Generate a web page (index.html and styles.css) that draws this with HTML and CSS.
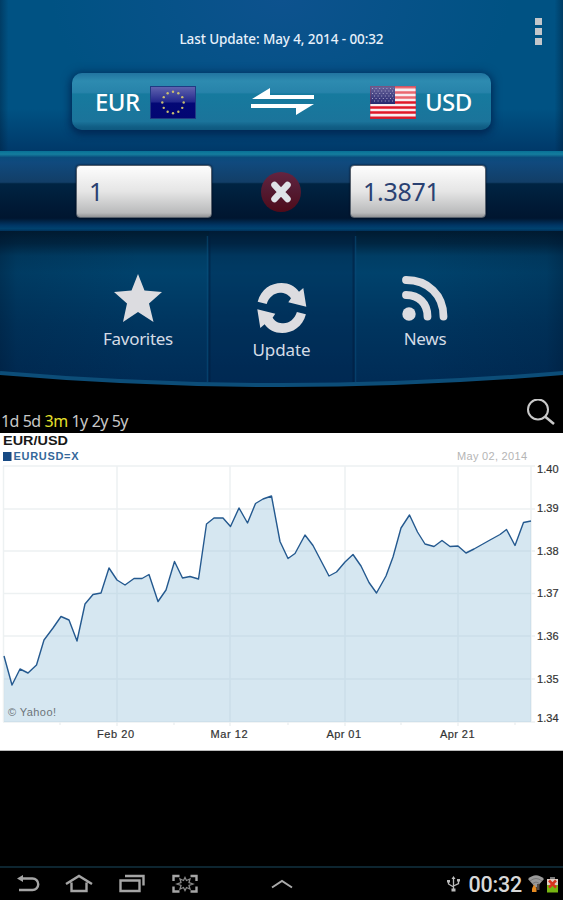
FILE: index.html
```
<!DOCTYPE html>
<html lang="en">
<head>
  <meta charset="UTF-8">
  <meta name="viewport" content="width=device-width, initial-scale=1.0">
  <title>Currency Converter</title>
  <link rel="stylesheet" href="styles.css">
</head>
<body>
  <div class="app">
    <div class="header">
      <div class="last-update">Last Update: May 4, 2014 - 00:32</div>
      <button class="menu-btn" aria-label="Menu"><i></i><i></i><i></i></button>
      <div class="pair">
        <span class="code code-from">EUR</span>
        <svg class="flag" width="46" height="33" viewBox="0 0 46 33">
          <defs>
            <linearGradient id="eu" x1="0" y1="0" x2="0" y2="1">
              <stop offset="0" stop-color="#6265b0"/><stop offset=".48" stop-color="#22278c"/><stop offset=".52" stop-color="#030875"/><stop offset="1" stop-color="#020672"/>
            </linearGradient>
            <linearGradient id="canton" x1="0" y1="0" x2="0" y2="1">
              <stop offset="0" stop-color="#6a659c"/><stop offset="1" stop-color="#27286f"/>
            </linearGradient>
          </defs>
          <rect x=".5" y=".5" width="45" height="32" fill="url(#eu)" stroke="#203a83"/>
          <g id="eu-stars" fill="#c9bd70"></g>
        </svg>
        <svg class="swap" width="64" height="29" viewBox="0 0 64 29">
          <path d="M1 12 19 1v7h44v4zM63 17 45 28v-7H0v-4z" fill="#fff"/>
        </svg>
        <svg class="flag" width="46" height="33" viewBox="0 0 46 33">
          <rect width="46" height="33" fill="#f7eef1"/>
          <path d="M0 1.3h46M0 6.4h46M0 11.4h46" stroke="#ea6870" stroke-width="2.5"/>
          <path d="M0 16.5h46M0 21.6h46M0 26.6h46M0 31.7h46" stroke="#e01828" stroke-width="2.5"/>
          <rect width="25" height="18" fill="url(#canton)"/>
          <path d="M2 2.500h22M4 5h20M2 7.500h22M4 10h20M2 12.500h22M4 15h20" stroke="#a9a6ca" stroke-width="1" stroke-dasharray="1 2.600"/>
          <rect x=".5" y=".5" width="45" height="32" fill="none" stroke="#953957" stroke-opacity=".35"/>
        </svg>
        <span class="code code-to">USD</span>
      </div>
    </div>

    <div class="amounts">
      <div class="amount">1</div>
      <svg class="clear" width="40" height="40" viewBox="0 0 40 40">
        <defs>
          <linearGradient id="red" x1="0" y1="0" x2="0" y2="1">
            <stop offset="0" stop-color="#652440"/><stop offset=".45" stop-color="#531b32"/><stop offset="1" stop-color="#500a19"/>
          </linearGradient>
        </defs>
        <circle cx="20" cy="20" r="20" fill="url(#red)"/>
        <path d="M13.500 13 26.500 27M26.500 13 13.500 27" stroke="#dfe3e8" stroke-width="6.500" stroke-linecap="round"/>
      </svg>
      <div class="amount">1.3871</div>
    </div>

    <div class="tabs">
      <svg class="tabs-bg" width="563" height="157" viewBox="0 0 563 157">
        <defs>
          <linearGradient id="panel" x1="0" y1="0" x2="0" y2="1">
            <stop offset="0" stop-color="#001b31"/><stop offset=".08" stop-color="#002642"/><stop offset=".16" stop-color="#003d64"/><stop offset=".27" stop-color="#00426c"/><stop offset=".6" stop-color="#00355f"/><stop offset="1" stop-color="#002b55"/>
          </linearGradient>
          <linearGradient id="side" x1="0" y1="0" x2="1" y2="0">
            <stop offset="0" stop-color="#00132b" stop-opacity=".35"/><stop offset=".03" stop-color="#00132b" stop-opacity=".15"/><stop offset=".25" stop-color="#00132b" stop-opacity="0"/><stop offset=".75" stop-color="#00132b" stop-opacity="0"/><stop offset=".97" stop-color="#00132b" stop-opacity=".15"/><stop offset="1" stop-color="#00132b" stop-opacity=".35"/>
          </linearGradient>
        </defs>
        <path d="M0 0H563V142Q420 155 281 155T0 142Z" fill="url(#panel)"/>
        <path d="M0 0H563V142Q420 155 281 155T0 142Z" fill="url(#side)"/>
        <path d="M209 0h147v153H209z" fill="#001f49" fill-opacity=".22"/>
        <path d="M207.500 5v146M355.500 5v146" stroke="#0a5280" stroke-opacity=".5" stroke-width="1.500"/>
        <path d="M209.500 5v146M353.500 5v146" stroke="#001c3d" stroke-opacity=".5" stroke-width="2"/>
        <path d="M0 142Q140 154 281 154T563 142" fill="none" stroke="#0c4d78" stroke-width="4"/>
      </svg>
      <div class="tab tab-favorites">
        <svg width="48" height="48" viewBox="0 0 48 48">
          <path d="M24 0 30.500 16.500 48 18 35 29.500 39.500 48 24 38 9 48 13 29.500 0 18 17.500 16.500z" fill="#dcdce0"/>
        </svg>
        <span>Favorites</span>
      </div>
      <div class="tab tab-update">
        <svg width="50" height="50" viewBox="0 0 50 50">
          <g id="arrow" fill="#dcdce0">
            <path d="M.7 18.700C4 6 14 0 24.500 0 32 0 38 3 42 8.700L46.300 5 49.300 23.700 31.300 19.300 34 15.300C31 11 27.500 9.700 23 9.700 17 10 12 14 9.700 21z"/>
          </g>
          <use href="#arrow" transform="rotate(180 24.800 25)"/>
        </svg>
        <span>Update</span>
      </div>
      <div class="tab tab-news">
        <svg width="46" height="46" viewBox="0 0 46 46">
          <circle cx="7" cy="38" r="6.700" fill="#dcdce0"/>
          <path d="M4 19C17 19 25.500 27.500 25.500 40.500M4 4C26 4 41.500 19 41.500 40.500" fill="none" stroke="#dcdce0" stroke-width="7.800" stroke-linecap="round"/>
        </svg>
        <span>News</span>
      </div>
    </div>

    <div class="range-bar">
      <div class="ranges">
        <span>1d</span><span>5d</span><span class="active">3m</span><span>1y</span><span>2y</span><span>5y</span>
      </div>
      <svg class="search" width="30" height="28" viewBox="0 0 30 28">
        <circle cx="12" cy="10.500" r="10" fill="none" stroke="#c9c9c9" stroke-width="2"/>
        <path d="M19 17.500 28 25" stroke="#c9c9c9" stroke-width="2.600"/>
      </svg>
    </div>

    <div class="chart">
      <svg width="563" height="317" viewBox="0 433 563 317">
        <g id="grid" stroke="#edf1f2" stroke-width="1.500"></g>
        <path id="area" fill="#9bc4dc" fill-opacity=".41"/>
        <path id="line" fill="none" stroke="#24598f" stroke-width="1.400" stroke-linejoin="round"/>
        <text class="chart-title" x="3" y="445" textLength="65" lengthAdjust="spacingAndGlyphs">EUR/USD</text>
        <rect x="3" y="452" width="8.500" height="9" fill="#174a84"/>
        <text class="chart-symbol" x="13.500" y="460" textLength="65">EURUSD=X</text>
        <text class="chart-date" x="457" y="460" textLength="70">May 02, 2014</text>
        <text class="chart-credit" x="8" y="716" textLength="48">© Yahoo!</text>
        <g id="labels" class="chart-axis"></g>
      </svg>
    </div>

    <div class="navbar">
      <svg class="nav-icons" width="190" height="20" viewBox="0 0 190 20" fill="none" stroke="#a5a5a5" stroke-width="2.400">
        <path d="M6 4.500h10.500a4.800 4.800 0 0 1 0 11.500H3"/>
        <path d="M1 4.500 7 1v7z" fill="#a5a5a5" stroke="none"/>
        <path d="M50 10 63 2l13 8M55.500 8.500V17h15V8.500"/>
        <path d="M104.500 6.500h19v10.500h-19zM109 2h18.500v9.500"/>
        <path d="M157.500 7V2h6M174.500 2h6v5M180.500 12.500v5h-6M163.500 17.500h-6v-5"/>
        <path d="M169 3.500 170.500 6.500 174 5 173 8.500 177 10 173 11.500 174 15 170.500 13.500 169 16.500 167.500 13.500 164 15 165 11.500 161 10 165 8.500 164 5 167.500 6.500z" stroke-width="1.300" stroke="#888"/>
      </svg>
      <svg class="caret" width="22" height="10" viewBox="0 0 22 10">
        <path d="M1 8.500 11 2l10 6.500" fill="none" stroke="#aaa" stroke-width="2"/>
      </svg>
      <div class="status">
        <svg width="13" height="16" viewBox="0 0 13 16" fill="none" stroke="#bbb" stroke-width="1.300">
          <path d="M6.500 2v11M1.500 5v3l5 3M11.500 4v3.500l-5 2.500"/>
          <path d="M6.500 0 8.500 3h-4zM0 4h3v2.500H0zM10 3h3v2.500h-3zM4.500 12.500h4v3h-4z" fill="#bbb" stroke="none"/>
        </svg>
        <span class="time">00:32</span>
        <svg width="16" height="18" viewBox="0 0 16 18">
          <path d="M0 4Q8-3.500 16 4L8 13z" fill="#999"/>
          <path d="M2 6Q8 1 14 6M4.500 8.500Q8 5.500 11.500 8.500" fill="none" stroke="#777"/>
          <path d="M6 9.500 8.500 13.500V17H4v-3.500z" fill="#e58a22"/>
          <path d="M9 9h2.500v6H9z" fill="#554a43"/>
        </svg>
        <svg class="battery" width="11" height="17" viewBox="0 0 11 17">
          <path d="M3 1h5v2H3z" fill="#777"/>
          <path d="M0 3h11v13.500H0z" fill="#77b512"/>
          <path d="M0 3h11v6H0z" fill="#ddd0c7"/>
          <path d="M2 4.500 9 11.500M9 4.500 2 11.500" stroke="#d8331e" stroke-width="2.500"/>
        </svg>
      </div>
    </div>
  </div>
  <script src="chart.js"></script>
</body>
</html>
```
FILE: styles.css
```
* {
  box-sizing: border-box;
}
body {
  margin: 0;
  background: #000;
  font-family: "Noto Sans", "Open Sans", sans-serif;
  overflow: hidden;
}
svg {
  display: block;
  flex-shrink: 0;
}
.app {
  width: 563px;
  height: 900px;
  display: flex;
  flex-direction: column;
}

/* header */
.header {
  position: relative;
  height: 151px;
  padding-top: 29px;
  background:
    linear-gradient(90deg, rgba(0, 28, 55, 0.4), transparent 1.5%, transparent 98.5%, rgba(0, 28, 55, 0.4)),
    linear-gradient(180deg, transparent 72%, rgba(0, 40, 88, 0.6)),
    radial-gradient(ellipse 230px 140px at 50% 0, #0d528e, rgba(13, 82, 142, 0) 100%),
    #005283;
}
.last-update {
  height: 20px;
  line-height: 20px;
  text-align: center;
  color: #e6f0fa;
  font-size: 13.5px;
  font-weight: 500;
  letter-spacing: -0.1px;
}
.menu-btn {
  position: absolute;
  top: 18px;
  right: 21px;
  display: flex;
  flex-direction: column;
  gap: 3px;
  padding: 0;
  border: none;
  background: none;
}
.menu-btn i {
  width: 7px;
  height: 7px;
  background: #c3c6ca;
}
.pair {
  display: flex;
  align-items: center;
  width: 419px;
  height: 57px;
  margin: 24px 0 0 72px;
  padding: 0 19px 0 23px;
  border-radius: 10px;
  background: linear-gradient(180deg, #2174a0 0, #2d8bb0 14%, #2783aa 34%, #167a9e 37%, #1b749b 85%, #115f86 94%, #0e587f);
  box-shadow: 0 1px 8px 2px rgba(0, 38, 83, 0.65), 0 4px 6px rgba(0, 34, 75, 0.6);
}
.pair .flag {
  position: relative;
  top: 1px;
}
.code {
  color: #fff;
  font-size: 24px;
  font-weight: 500;
  line-height: 34px;
  letter-spacing: -0.6px;
}
.code-from {
  width: 55px;
}
.swap {
  margin: 0 55px;
}
.code-to {
  margin-left: 9px;
}

/* amount inputs */
.amounts {
  display: flex;
  align-items: center;
  justify-content: space-between;
  height: 80px;
  padding: 1px 77px 0 76px;
  background: linear-gradient(180deg, #087095 0, #147d9e 4%, #0a4c7c 8%, #104a7e 14%, #123e67 39%, #002442 41%, #001a36 68%, #001630 84%, #003665 93%, #00426f 97%, #00315a);
}
.amount {
  width: 136px;
  height: 53px;
  padding-left: 12px;
  border: 1px solid #56606c;
  border-radius: 4px;
  background: linear-gradient(180deg, #fdfdfd, #e5e5e5 50%, #b9babb 92%, #929395);
  box-shadow: 0 0 2px #000b1c;
  color: #2a4172;
  font-size: 25px;
  line-height: 51px;
  letter-spacing: -0.3px;
}

/* shortcut panel */
.tabs {
  position: relative;
  display: grid;
  grid-template-columns: 208px 147px 208px;
  height: 157px;
}
.tabs-bg {
  position: absolute;
  inset: 0;
}
.tab {
  position: relative;
  display: flex;
  flex-direction: column;
  align-items: center;
  color: #d5dce6;
  font-size: 17px;
  line-height: 24px;
}
.tab-favorites {
  padding: 43px 0 0 68px;
}
.tab-favorites span {
  margin-top: 5px;
  letter-spacing: -0.3px;
}
.tab-update {
  padding-top: 52px;
}
.tab-update span {
  margin-top: 5px;
  letter-spacing: -0.1px;
}
.tab-news {
  padding: 45px 68px 0 0;
}
.tab-news span {
  margin-top: 5px;
  letter-spacing: -0.3px;
}

/* chart */
.range-bar {
  display: flex;
  justify-content: space-between;
  height: 45px;
  padding: 11px 7px 0 1px;
}
.ranges {
  display: flex;
  gap: 4px;
  padding-top: 10px;
  color: #c8c8c8;
  font-size: 16px;
  line-height: 24px;
  letter-spacing: -0.6px;
}
.ranges .active {
  color: #e5e02c;
}
.chart {
  height: 318px;
  background: #fff;
  border-bottom: 1px solid #bbb;
}
.chart text {
  font-family: "Liberation Sans", Arial, sans-serif;
}
.chart .chart-title {
  font-size: 12.5px;
  font-weight: bold;
  fill: #181818;
}
.chart .chart-symbol {
  font-size: 11px;
  font-weight: bold;
  fill: #34689a;
}
.chart .chart-date {
  font-size: 11px;
  fill: #b5b5b5;
}
.chart .chart-credit {
  font-size: 11px;
  fill: #6c7479;
}
.chart-axis {
  font-size: 11px;
  fill: #333;
  stroke: #333;
  stroke-width: 0.2px;
}

/* system bar */
.navbar {
  display: flex;
  align-items: center;
  height: 34px;
  margin-top: auto;
  padding: 0 5px 0 16px;
  border-top: 2px solid #0d2530;
}
.caret {
  margin-left: 65px;
}
.status {
  display: flex;
  align-items: center;
  margin-left: auto;
}
.time {
  margin: 2px 6px 0 8px;
  color: #d8d8d8;
  font-family: Roboto, sans-serif;
  font-size: 21.5px;
  font-weight: 500;
  line-height: 24px;
  letter-spacing: -0.2px;
}
.battery {
  margin-left: 3px;
}
```
FILE: chart.js
```
const points = [
  [4, 656], [12, 685], [20, 669], [28, 673], [36.5, 665], [44, 640], [53, 628], [61, 616.5],
  [69, 620], [77, 641], [85, 604], [93, 594.5], [101, 593], [109, 568], [117, 580], [125, 585],
  [134, 578.5], [142, 578.5], [149, 574.5], [158, 601.5], [166, 590], [174.5, 561.5], [182.5, 578],
  [190, 576.5], [198.5, 579], [206.5, 524], [214, 518], [223, 518], [230.5, 526.5], [239, 508],
  [247.5, 523], [255.5, 503.5], [263, 499], [271.5, 496], [280, 541.5], [288, 558.5], [295, 553.5],
  [305, 535], [313, 545.5], [329, 576], [336.5, 572], [345, 562], [353, 554.5], [361, 566],
  [369, 582.5], [376.5, 593], [386, 576], [393, 557], [401, 528], [409.5, 515], [417.5, 532],
  [425, 544], [434, 546.5], [442, 540.5], [450, 546.5], [458, 546], [466, 553], [474, 549],
  [490, 540], [500, 534.5], [506.5, 529.5], [515, 545.5], [523.5, 522.5], [531, 521]
];
const line = 'M' + points.map(p => p.join(' ')).join('L');
document.getElementById('line').setAttribute('d', line);
document.getElementById('area').setAttribute('d', line + 'V722H4Z');

// grid and axis labels
const rows = [[466, '1.40', 473], [509, '1.39', 512], [551, '1.38', 555], [593.5, '1.37', 597], [636, '1.36', 640], [679, '1.35', 683], [722, '1.34', 722]];
const cols = [[117, 'Feb 20', 97], [230, 'Mar 12', 210.5], [345, 'Apr 01', 326.5], [458, 'Apr 21', 440]];
let grid = '<path d="M3.500 466V722M531 466V722"/>';
let labels = '';
rows.forEach(([y, text, ty]) => {
  grid += `<path d="M3 ${y}H535"/>`;
  labels += `<text x="537" y="${ty}" textLength="21.500">${text}</text>`;
});
cols.forEach(([x, text, tx]) => {
  grid += `<path d="M${x} 466V726"/>`;
  labels += `<text x="${tx}" y="738" textLength="${text === 'Mar 12' || text === 'Feb 20' ? 37 : 34.5}">${text}</text>`;
});
[60, 174, 288, 401, 515].forEach(x => {
  grid += `<path d="M${x} 722v3"/>`;
});
document.getElementById('grid').innerHTML = grid;
document.getElementById('labels').innerHTML = labels;

// twelve stars of the EU flag
let stars = '';
for (let i = 0; i < 12; i++) {
  const a = i * Math.PI / 6;
  stars += `<circle cx="${23 + 10.7 * Math.sin(a)}" cy="${16.5 - 10.7 * Math.cos(a)}" r="1.200"/>`;
}
document.getElementById('eu-stars').innerHTML = stars;
```
